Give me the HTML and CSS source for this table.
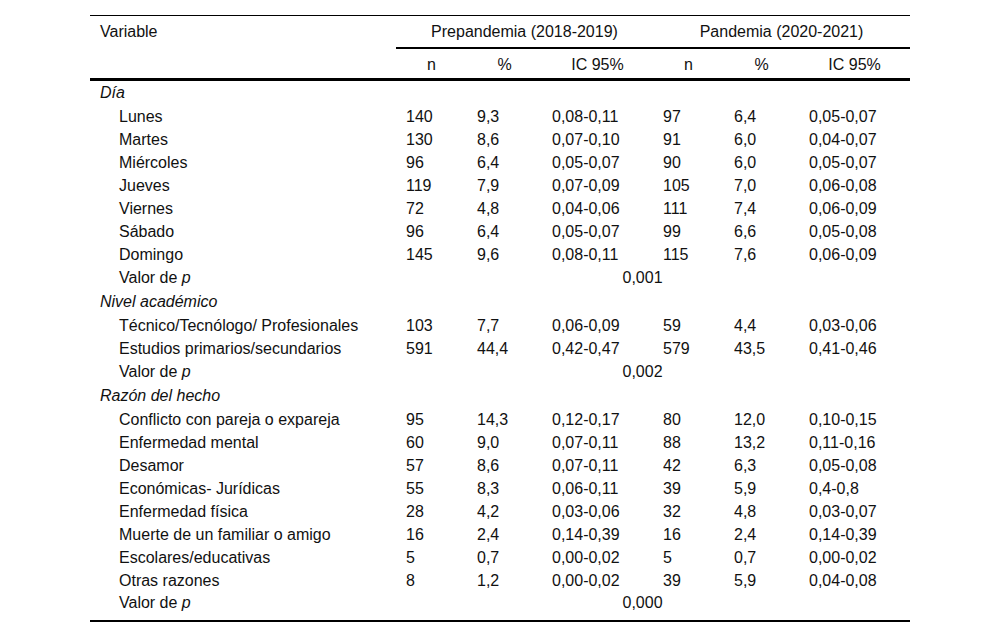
FILE: index.html
```html
<!DOCTYPE html>
<html lang="es">
<head>
<meta charset="utf-8">
<title>Tabla</title>
<link rel="stylesheet" href="styles.css">
</head>
<body>
<div class="wrap">
<table class="tbl">
  <colgroup>
    <col class="c-var"><col class="c-n"><col class="c-p"><col class="c-ic"><col class="c-n"><col class="c-p"><col class="c-ic">
  </colgroup>
  <thead>
    <tr class="h1">
      <th class="hv">Variable</th>
      <th class="grp" colspan="3">Prepandemia (2018-2019)</th>
      <th class="grp" colspan="3">Pandemia (2020-2021)</th>
    </tr>
    <tr class="h2">
      <th></th>
      <th>n</th><th>%</th><th>IC 95%</th>
      <th>n</th><th>%</th><th>IC 95%</th>
    </tr>
  </thead>
  <tbody>
    <tr class="sec first"><td colspan="7"><em>Día</em></td></tr>
    <tr><td class="lab">Lunes</td><td>140</td><td>9,3</td><td>0,08-0,11</td><td>97</td><td>6,4</td><td>0,05-0,07</td></tr>
    <tr><td class="lab">Martes</td><td>130</td><td>8,6</td><td>0,07-0,10</td><td>91</td><td>6,0</td><td>0,04-0,07</td></tr>
    <tr><td class="lab">Miércoles</td><td>96</td><td>6,4</td><td>0,05-0,07</td><td>90</td><td>6,0</td><td>0,05-0,07</td></tr>
    <tr><td class="lab">Jueves</td><td>119</td><td>7,9</td><td>0,07-0,09</td><td>105</td><td>7,0</td><td>0,06-0,08</td></tr>
    <tr><td class="lab">Viernes</td><td>72</td><td>4,8</td><td>0,04-0,06</td><td>111</td><td>7,4</td><td>0,06-0,09</td></tr>
    <tr><td class="lab">Sábado</td><td>96</td><td>6,4</td><td>0,05-0,07</td><td>99</td><td>6,6</td><td>0,05-0,08</td></tr>
    <tr><td class="lab">Domingo</td><td>145</td><td>9,6</td><td>0,08-0,11</td><td>115</td><td>7,6</td><td>0,06-0,09</td></tr>
    <tr><td class="lab">Valor de <em>p</em></td><td class="pv" colspan="6">0,001</td></tr>
    <tr class="sec"><td colspan="7"><em>Nivel académico</em></td></tr>
    <tr><td class="lab">Técnico/Tecnólogo/ Profesionales</td><td>103</td><td>7,7</td><td>0,06-0,09</td><td>59</td><td>4,4</td><td>0,03-0,06</td></tr>
    <tr><td class="lab">Estudios primarios/secundarios</td><td>591</td><td>44,4</td><td>0,42-0,47</td><td>579</td><td>43,5</td><td>0,41-0,46</td></tr>
    <tr><td class="lab">Valor de <em>p</em></td><td class="pv" colspan="6">0,002</td></tr>
    <tr class="sec"><td colspan="7"><em>Razón del hecho</em></td></tr>
    <tr><td class="lab">Conflicto con pareja o expareja</td><td>95</td><td>14,3</td><td>0,12-0,17</td><td>80</td><td>12,0</td><td>0,10-0,15</td></tr>
    <tr><td class="lab">Enfermedad mental</td><td>60</td><td>9,0</td><td>0,07-0,11</td><td>88</td><td>13,2</td><td>0,11-0,16</td></tr>
    <tr><td class="lab">Desamor</td><td>57</td><td>8,6</td><td>0,07-0,11</td><td>42</td><td>6,3</td><td>0,05-0,08</td></tr>
    <tr><td class="lab">Económicas- Jurídicas</td><td>55</td><td>8,3</td><td>0,06-0,11</td><td>39</td><td>5,9</td><td>0,4-0,8</td></tr>
    <tr><td class="lab">Enfermedad física</td><td>28</td><td>4,2</td><td>0,03-0,06</td><td>32</td><td>4,8</td><td>0,03-0,07</td></tr>
    <tr><td class="lab">Muerte de un familiar o amigo</td><td>16</td><td>2,4</td><td>0,14-0,39</td><td>16</td><td>2,4</td><td>0,14-0,39</td></tr>
    <tr><td class="lab">Escolares/educativas</td><td>5</td><td>0,7</td><td>0,00-0,02</td><td>5</td><td>0,7</td><td>0,00-0,02</td></tr>
    <tr><td class="lab">Otras razones</td><td>8</td><td>1,2</td><td>0,00-0,02</td><td>39</td><td>5,9</td><td>0,04-0,08</td></tr>
    <tr class="last"><td class="lab">Valor de <em>p</em></td><td class="pv" colspan="6">0,000</td></tr>
  </tbody>
</table>
</div>
</body>
</html>
```

FILE: styles.css
```css
html, body {
  margin: 0;
  padding: 0;
  background: #fff;
}
body {
  font-family: "Liberation Sans", Arial, sans-serif;
  font-size: 16px;
  color: #111;
}
.wrap {
  padding: 15px 0 0 90px;
}
.tbl {
  width: 820px;
  border-collapse: collapse;
  table-layout: fixed;
  border-top: 1px solid #000;
  border-bottom: 2px solid #000;
}
.c-var { width: 306px; }
.c-n { width: 71px; }
.c-p { width: 75px; }
.c-ic { width: 111px; }

.tbl th {
  font-weight: normal;
  text-align: center;
  padding: 0;
  line-height: 18px;
}
.tbl .h1 th {
  height: 31px;
  vertical-align: middle;
}
.tbl .h1 .hv {
  text-align: left;
  padding-left: 10px;
}
.tbl .h1 .grp {
  border-bottom: 2px solid #000;
}
.tbl .h2 th {
  height: 25px;
  padding-bottom: 4px;
  vertical-align: bottom;
  border-bottom: 3px solid #000;
}
.tbl td {
  height: 23px;
  padding: 0 0 0 10px;
  vertical-align: middle;
  white-space: nowrap;
  line-height: 18px;
}
.tbl td.lab {
  padding-left: 29px;
}
.tbl .sec td {
  height: 25px;
  padding-left: 10px;
}
.tbl .sec.first td {
  height: 24px;
}
.tbl td.pv {
  text-align: center;
  padding-left: 0;
  padding-right: 21px;
}
.tbl .last td {
  height: 22px;
  padding-bottom: 6px;
}
```
